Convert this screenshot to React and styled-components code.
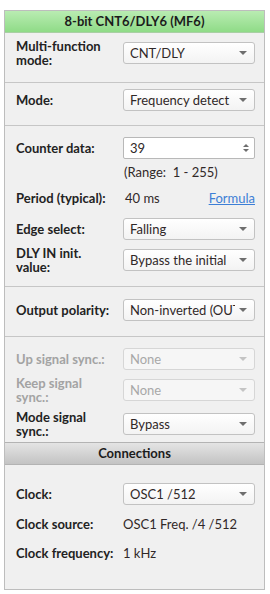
import React from 'react'
import styled, { createGlobalStyle } from 'styled-components'

const GlobalStyle = createGlobalStyle`
    body {
        margin: 0;
        background: #ffffff;
        font-family: Lato, "Liberation Sans", sans-serif;
    }
`

const Panel = styled.div`
    box-sizing: border-box;
    width: 261px;
    margin: 10px 0 0 4px;
    border: 1px solid #bdbdbd;
    background: #f0f0f0;
`

const Header = styled.div`
    height: 21px;
    line-height: 21px;
    text-align: center;
    font-size: 13px;
    font-weight: 700;
    color: #1c1c1c;
    background: ${p => p.green
        ? 'linear-gradient(#b9ecb2, #8fdb87)'
        : 'linear-gradient(#e4e4e4, #c3c3c3)'};
    border-top: ${p => p.green ? 'none' : '1px solid #b3b3b3'};
    border-bottom: 1px solid ${p => p.green ? '#a9cfa4' : '#b3b3b3'};
`

const Section = styled.div`
    padding: ${p => p.pt ?? 6}px 9px ${p => p.pb ?? 0}px 11px;
    & + & {
        border-top: 1px solid #c6c6c6;
    }
`

const Row = styled.div`
    display: grid;
    grid-template-columns: 107px 132px;
    align-items: center;
    height: ${p => p.h ?? 31}px;
`

const Label = styled.div`
    font-size: 13px;
    font-weight: 700;
    line-height: 14px;
    white-space: nowrap;
    color: ${p => p.disabled ? '#a3a3a3' : '#222222'};
`

const Value = styled.div`
    font-size: 13px;
    color: #302828;
    padding-left: ${p => p.pl ?? 0}px;
    display: flex;
    justify-content: space-between;
`

const Link = styled.a`
    color: #3d7fd6;
    text-decoration: underline;
    cursor: pointer;
`

const Select = styled.div`
    box-sizing: border-box;
    height: 22px;
    display: flex;
    align-items: center;
    justify-content: space-between;
    padding: 0 7px 0 6px;
    border: 1px solid ${p => p.disabled ? '#d6d6d6' : '#c2c2c2'};
    border-radius: 3px;
    background: ${p => p.disabled ? '#f6f6f6' : 'linear-gradient(#ffffff, #f3f3f3)'};
    font-size: 13px;
    color: ${p => p.disabled ? '#a8a8a8' : '#302828'};
    white-space: nowrap;
    overflow: hidden;
`

const SelectText = styled.span`
    overflow: hidden;
    flex: 1;
`

const Arrow = styled.span`
    flex: none;
    width: 0;
    height: 0;
    margin-left: 4px;
    border-left: 4px solid transparent;
    border-right: 4px solid transparent;
    border-top: 4px solid ${p => p.disabled ? '#c4c4c4' : '#6e6e6e'};
`

const Spin = styled(Select)`
    background: #ffffff;
    border-radius: 2px;
    border-color: #b8b8b8;
    padding-right: 5px;
`

const SpinArrows = styled.span`
    display: flex;
    flex-direction: column;
    gap: 2px;
    &::before, &::after {
        content: '';
        width: 0;
        height: 0;
        border-left: 3px solid transparent;
        border-right: 3px solid transparent;
    }
    &::before { border-bottom: 3px solid #6e6e6e; }
    &::after { border-top: 3px solid #6e6e6e; }
`

const Dropdown = ({ children, disabled }) => (
    <Select disabled={disabled}>
        <SelectText>{children}</SelectText>
        <Arrow disabled={disabled} />
    </Select>
)

const App = () => {
    return (
        <>
            <GlobalStyle />
            <Panel>
                <Header green>8-bit CNT6/DLY6 (MF6)</Header>
                <Section pb={15}>
                    <Row h={28}>
                        <Label>Multi-function<br />mode:</Label>
                        <Dropdown>CNT/DLY</Dropdown>
                    </Row>
                </Section>
                <Section pb={14}>
                    <Row h={22}>
                        <Label>Mode:</Label>
                        <Dropdown>Frequency detect</Dropdown>
                    </Row>
                </Section>
                <Section pb={8}>
                    <Row>
                        <Label>Counter data:</Label>
                        <Spin>
                            <SelectText>39</SelectText>
                            <SpinArrows />
                        </Spin>
                    </Row>
                    <Row h={18}>
                        <span />
                        <Value pl={1}>(Range:&nbsp; 1 - 255)</Value>
                    </Row>
                    <Row h={34}>
                        <Label>Period (typical):</Label>
                        <Value pl={2}>
                            <span>40 ms</span>
                            <Link>Formula</Link>
                        </Value>
                    </Row>
                    <Row h={27}>
                        <Label>Edge select:</Label>
                        <Dropdown>Falling</Dropdown>
                    </Row>
                    <Row h={36}>
                        <Label>DLY IN init.<br />value:</Label>
                        <Dropdown>Bypass the initial</Dropdown>
                    </Row>
                </Section>
                <Section pb={9}>
                    <Row h={34}>
                        <Label>Output polarity:</Label>
                        <Dropdown>Non-inverted (OUT)</Dropdown>
                    </Row>
                </Section>
                <Section>
                    <Row h={32}>
                        <Label disabled>Up signal sync.:</Label>
                        <Dropdown disabled>None</Dropdown>
                    </Row>
                    <Row h={30}>
                        <Label disabled>Keep signal<br />sync.:</Label>
                        <Dropdown disabled>None</Dropdown>
                    </Row>
                    <Row h={37}>
                        <Label>Mode signal<br />sync.:</Label>
                        <Dropdown>Bypass</Dropdown>
                    </Row>
                </Section>
                <Header>Connections</Header>
                <Section pt={17} pb={25}>
                    <Row h={24}>
                        <Label>Clock:</Label>
                        <Dropdown>OSC1 /512</Dropdown>
                    </Row>
                    <Row h={36}>
                        <Label>Clock source:</Label>
                        <Value>OSC1 Freq. /4 /512</Value>
                    </Row>
                    <Row h={22}>
                        <Label>Clock frequency:</Label>
                        <Value>1 kHz</Value>
                    </Row>
                </Section>
            </Panel>
        </>
    )
}

export default App
